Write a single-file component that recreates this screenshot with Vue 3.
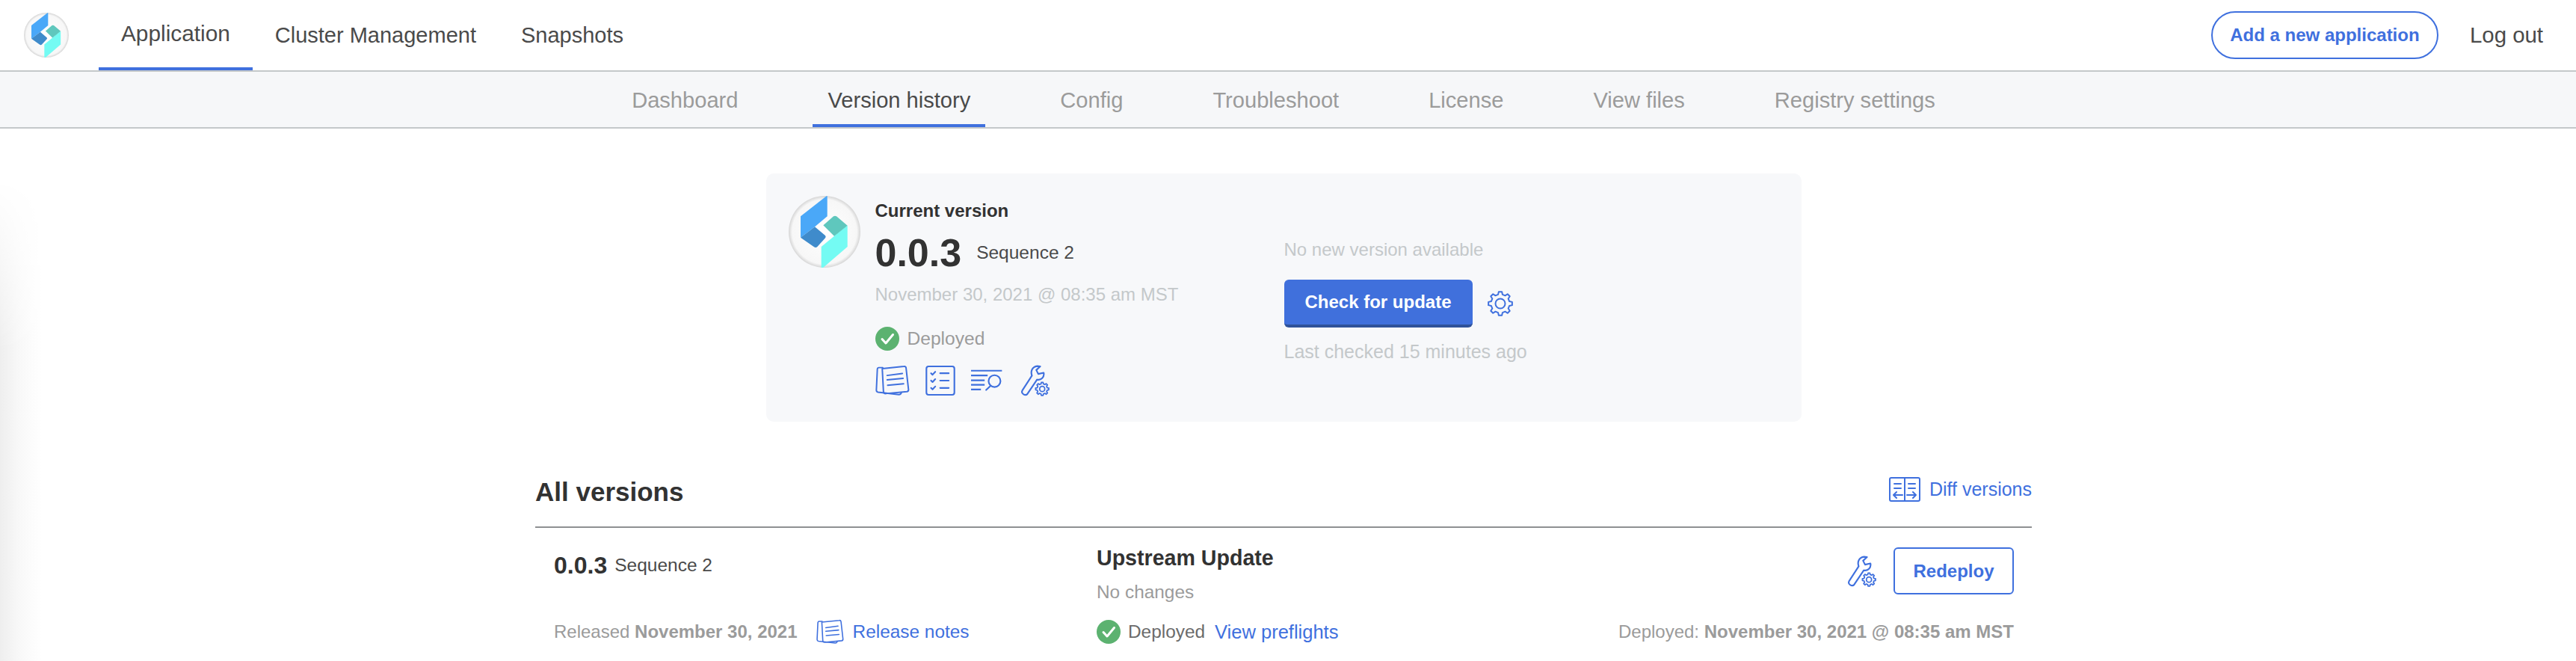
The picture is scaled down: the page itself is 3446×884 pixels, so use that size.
<script setup>
// gear outline with rounded lobes, used by the settings and wrench icons
function gearPath(cx, cy, ro, ri, n) {
  const step = (Math.PI * 2) / n
  const pt = (r, a) => (cx + r * Math.cos(a)).toFixed(2) + ' ' + (cy + r * Math.sin(a)).toFixed(2)
  let d = ''
  for (let i = 0; i < n; i++) {
    const a = i * step - Math.PI / 2
    d += (i === 0 ? 'M' : 'L') + pt(ri, a - step * 0.3)
    d += 'L' + pt(ro, a - step * 0.17) + 'L' + pt(ro, a + step * 0.17) + 'L' + pt(ri, a + step * 0.3)
  }
  return d + 'Z'
}

const bigGear = gearPath(17, 17, 16, 12.5, 8)
const smallGear = gearPath(698, 150, 27, 21, 8)

const navItems = [
  { label: 'Application', active: true },
  { label: 'Cluster Management' },
  { label: 'Snapshots' },
]
const subItems = [
  { label: 'Dashboard' },
  { label: 'Version history', active: true },
  { label: 'Config' },
  { label: 'Troubleshoot' },
  { label: 'License' },
  { label: 'View files' },
  { label: 'Registry settings' },
]
</script>

<template>
  <div class="page">
    <svg class="defs" width="0" height="0" aria-hidden="true">
      <defs>
        <radialGradient id="logoBg" cx="50%" cy="50%" r="50%">
          <stop offset="0%" stop-color="#ffffff" />
          <stop offset="90%" stop-color="#f7f7f7" />
          <stop offset="100%" stop-color="#d6d6d6" />
        </radialGradient>
        <clipPath id="logoClip"><circle cx="186" cy="180" r="144" /></clipPath>
        <symbol id="logo" viewBox="42 36 288 288">
          <circle cx="186" cy="180" r="144" fill="url(#logoBg)" />
          <g clip-path="url(#logoClip)">
            <path d="M197 34 L90 118 L90 203 L147 160 L197 118 Z" fill="#4aa8f8" />
            <path d="M90 203 L147 160 L189 195 Q193 200 189 205 L157 240 Q151 246 144 241 Z" fill="#3f8bcb" />
            <path d="M181 154 L222 118 Q228 114 234 118 L278 155 L225 197 Z" fill="#5fc7bd" />
            <path d="M225 197 L278 155 L240 196 L232 202 Z" fill="#52aea6" />
            <path d="M278 155 L278 240 L178 326 L173 326 L173 240 L225 197 Z" fill="#74fbf3" />
          </g>
        </symbol>
        <symbol id="notes" viewBox="32 55 140 128">
          <g fill="none" stroke="#3f70de" stroke-width="6" stroke-linecap="round" stroke-linejoin="round">
            <path d="M60 70 L148 61 Q156 60 157 67 L167 155 Q168 163 160 164 L74 172 Q66 172 65 165 Z" />
            <path d="M62 66 L46 66 Q41 66 40 72 L36 158 Q36 165 43 166 L128 176 Q135 176 138 168" />
            <path d="M80 98 L142 90 M80 116 L145 110 M82 138 L147 132" />
          </g>
        </symbol>
        <symbol id="checklist" viewBox="232 56 126 128">
          <g fill="none" stroke="#3f70de" stroke-width="6.5" stroke-linecap="round" stroke-linejoin="round">
            <rect x="238" y="62" width="114" height="116" rx="9" />
            <path d="M257 90 L263 96 L274 84 M257 120 L263 126 L274 114 M257 150 L263 156 L274 144" />
            <path d="M294 90 H329 M294 120 H329 M294 150 H329" />
          </g>
        </symbol>
        <symbol id="logs" viewBox="412 70 130 90">
          <g fill="none" stroke="#3f70de" stroke-width="6.5" stroke-linejoin="round">
            <path d="M415 75 H540 M415 94 H482 M415 114 H470 M415 132 H470 M415 151 H455" />
            <circle cx="510" cy="117" r="24" />
            <path d="M494 136 L476 153" stroke-linecap="round" />
          </g>
        </symbol>
        <symbol id="wrench" viewBox="610 52 120 128">
          <g fill="none" stroke="#3f70de" stroke-linecap="round" stroke-linejoin="round">
            <path stroke-width="6.5" d="M617 156 L656 96 C650 78 656 60 678 57 L690 58 L674 73 L682 89 L704 84 C708 102 693 116 677 112 L638 170 C630 180 610 170 617 156 Z" />
            <path stroke-width="5.5" :d="smallGear" />
            <circle stroke-width="5.5" cx="698" cy="150" r="10.5" />
          </g>
        </symbol>
        <symbol id="check" viewBox="0 0 32 32">
          <circle cx="16" cy="16" r="16" fill="#5cb270" />
          <path d="M9 16.5 L14 22 L23.5 10.5" fill="none" stroke="#ffffff" stroke-width="3" stroke-linecap="round" stroke-linejoin="round" />
        </symbol>
      </defs>
    </svg>

    <header class="topbar">
      <svg class="top-logo"><use href="#logo" /></svg>
      <nav class="top-nav">
        <a v-for="item in navItems" :key="item.label" class="top-link" :class="{ active: item.active }">{{ item.label }}</a>
      </nav>
      <div class="top-right">
        <button class="pill">Add a new application</button>
        <a class="logout">Log out</a>
      </div>
    </header>

    <nav class="subnav">
      <a v-for="item in subItems" :key="item.label" class="sub-link" :class="{ active: item.active }">{{ item.label }}</a>
    </nav>

    <main class="content">
      <section class="current-card">
        <svg class="card-logo"><use href="#logo" /></svg>
        <div class="current-left">
          <div class="current-label">Current version</div>
          <div class="current-version">
            <span class="version-big">0.0.3</span>
            <span class="sequence">Sequence 2</span>
          </div>
          <div class="current-date">November 30, 2021 @ 08:35 am MST</div>
          <div class="status-row">
            <svg class="check-icon"><use href="#check" /></svg>
            <span class="status-text">Deployed</span>
          </div>
          <div class="icon-row">
            <svg class="ic-notes"><use href="#notes" /></svg>
            <svg class="ic-check"><use href="#checklist" /></svg>
            <svg class="ic-logs"><use href="#logs" /></svg>
            <svg class="ic-wrench"><use href="#wrench" /></svg>
          </div>
        </div>
        <div class="current-right">
          <div class="muted-line">No new version available</div>
          <div class="update-row">
            <button class="primary-btn">Check for update</button>
            <svg class="gear-icon" viewBox="0 0 34 34">
              <g fill="none" stroke="#3f70de" stroke-width="2" stroke-linejoin="round">
                <path :d="bigGear" />
                <circle cx="17" cy="17" r="6.5" />
              </g>
            </svg>
          </div>
          <div class="muted-line last-checked">Last checked 15 minutes ago</div>
        </div>
      </section>

      <section class="versions">
        <div class="versions-head">
          <h2 class="versions-title">All versions</h2>
          <a class="diff-link">
            <svg class="diff-icon" viewBox="0 0 42 33">
              <g fill="none" stroke="#3f70de" stroke-width="2" stroke-linecap="round" stroke-linejoin="round">
                <rect x="1" y="1" width="40" height="31" rx="2" />
                <path d="M21 1 V32" />
                <path d="M7 9 H16 M7 15 H16 M26 9 H35 M26 15 H35" />
                <path d="M18 24 H6 M10 20 L6 24 L10 28 M24 24 H36 M32 20 L36 24 L32 28" />
              </g>
            </svg>
            Diff versions
          </a>
        </div>

        <div class="version-row">
          <div class="col col-left">
            <div class="row-version">
              <span class="version-num">0.0.3</span>
              <span class="sequence">Sequence 2</span>
            </div>
            <div class="row-foot">
              <span class="grey-text">Released <b>November 30, 2021</b></span>
              <a class="notes-link">
                <svg class="ic-notes-small"><use href="#notes" /></svg>
                Release notes
              </a>
            </div>
          </div>
          <div class="col col-mid">
            <div>
              <div class="row-title">Upstream Update</div>
              <div class="grey-text row-sub">No changes</div>
            </div>
            <div class="row-foot">
              <svg class="check-icon"><use href="#check" /></svg>
              <span class="row-status">Deployed</span>
              <a class="preflight-link">View preflights</a>
            </div>
          </div>
          <div class="col col-right">
            <div class="row-actions">
              <svg class="ic-wrench"><use href="#wrench" /></svg>
              <button class="outline-btn">Redeploy</button>
            </div>
            <div class="row-foot">
              <span class="grey-text">Deployed: <b>November 30, 2021 @ 08:35 am MST</b></span>
            </div>
          </div>
        </div>
      </section>
    </main>

    <div class="side-shadow"></div>
  </div>
</template>

<style>
html, body { margin: 0; background: #ffffff; }
</style>

<style scoped>
.page {
  position: relative; width: 3446px; height: 884px; overflow: hidden;
  background: #ffffff; color: #323232;
  font-family: "Liberation Sans", Arial, sans-serif;
}
.defs { position: absolute; }
a { display: inline-block; }
button { font-family: inherit; cursor: pointer; }

.topbar {
  display: flex; align-items: center; height: 94px; padding: 0 44px 0 32px;
  border-bottom: 2px solid #c4c8ca;
}
.top-logo { width: 60px; height: 60px; margin-right: 40px; }
.top-nav { display: flex; align-self: stretch; }
.top-link {
  display: flex; align-items: center; padding: 0 30px;
  font-size: 29px; color: #4a4a4a; box-sizing: border-box;
}
.top-link.active { border-bottom: 4px solid #3f70de; font-size: 29.8px; }
.top-right { display: flex; align-items: center; margin-left: auto; }
.pill {
  width: 304px; height: 64px; border: 2px solid #3f70de; border-radius: 32px;
  background: #ffffff; color: #3f70de; font-size: 24px; font-weight: 700; padding: 0;
}
.logout { margin-left: 42px; font-size: 29.4px; color: #4a4a4a; }

.subnav {
  display: flex; justify-content: center; gap: 80px; height: 74px;
  padding-right: 12px; background: #f6f7f9; border-bottom: 2px solid #c4c8ca;
}
.sub-link {
  display: flex; align-items: center; padding: 2px 20px 0; box-sizing: border-box;
  font-size: 29.1px; color: #9b9b9b;
}
.sub-link.active { color: #4a4a4a; border-bottom: 4px solid #3f70de; padding-top: 6px; }

.content { display: flex; flex-direction: column; align-items: center; padding: 60px 12px 0 0; }

.current-card {
  display: flex; width: 1385px; height: 332px; box-sizing: border-box;
  padding: 30px; background: #f7f8fa; border-radius: 10px;
}
.card-logo { flex: none; width: 96px; height: 96px; margin-right: 20px; }
.current-left { width: 547px; flex: none; padding-top: 6px; }
.current-label { font-size: 24px; font-weight: 700; line-height: 28px; color: #323232; }
.current-version { display: flex; align-items: center; margin-top: 16px; height: 52px; }
.version-big { font-size: 52px; font-weight: 700; color: #323232; margin-right: 20px; }
.sequence { font-size: 24.5px; color: #4a4a4a; }
.current-date { margin-top: 16px; font-size: 24px; line-height: 28px; color: #c4c8ca; }
.status-row { display: flex; align-items: center; margin-top: 29px; }
.check-icon { flex: none; width: 32px; height: 32px; }
.status-text { margin-left: 11px; font-size: 24.6px; color: #9b9b9b; }
.icon-row { display: flex; align-items: center; margin-top: 19px; }
.ic-notes { width: 46px; height: 42px; margin-right: 20px; }
.ic-check { width: 42px; height: 42px; margin-right: 19px; }
.ic-logs { width: 43px; height: 30px; margin-right: 24px; }
.ic-wrench { width: 40px; height: 42px; }

.current-right { display: flex; flex-direction: column; padding-top: 58px; }
.muted-line { font-size: 24px; line-height: 28px; color: #c4c8ca; }
.last-checked { font-size: 25px; }
.update-row { display: flex; align-items: center; margin: 26px 0 18px; }
.primary-btn {
  width: 252px; height: 64px; padding: 0; border: 0; border-bottom: 4px solid #2f5299; border-radius: 6px;
  background: #4070dc; color: #ffffff; font-size: 24px; font-weight: 700;
}
.gear-icon { width: 34px; height: 34px; margin-left: 20px; }

.versions { width: 2002px; margin-top: 54px; }
.versions-head {
  display: flex; justify-content: space-between; align-items: flex-start; height: 88px;
  padding-top: 20px; box-sizing: border-box; border-bottom: 2px solid #8e9092;
}
.versions-title { margin: 0; font-size: 35px; font-weight: 700; line-height: 40px; color: #323232; }
.diff-link { display: flex; align-items: center; gap: 12px; font-size: 25px; color: #3f70de; }
.diff-icon { width: 42px; height: 33px; }

.version-row { display: flex; height: 132px; padding: 24px 24px 0 25px; }
.col { display: flex; flex-direction: column; justify-content: space-between; }
.col-left { width: 726px; flex: none; }
.col-mid { flex: 1; }
.col-right { align-items: flex-end; }
.row-version { display: flex; align-items: center; height: 52px; }
.version-num { font-size: 32px; font-weight: 700; color: #323232; margin-right: 10px; }
.row-foot { display: flex; align-items: center; height: 34px; }
.grey-text { font-size: 24px; color: #9b9b9b; }
.grey-text b { font-weight: 700; }
.notes-link { display: flex; align-items: center; margin-left: 25px; font-size: 24.4px; color: #3f70de; }
.ic-notes-small { width: 37px; height: 34px; margin-right: 12px; }
.row-title { font-size: 28.6px; font-weight: 700; color: #323232; line-height: 32px; }
.row-sub { margin-top: 16px; font-size: 24.4px; line-height: 28px; }
.row-status { margin-left: 10px; font-size: 24.4px; color: #6b6b6b; }
.preflight-link { margin-left: 13px; font-size: 25.5px; color: #3f70de; }
.row-actions { display: flex; align-items: center; gap: 22px; margin-top: 2px; }
.outline-btn {
  width: 161px; height: 63px; padding: 0; background: #ffffff; border: 2px solid #3f70de; border-radius: 6px;
  color: #3f70de; font-size: 24px; font-weight: 700;
}

.side-shadow {
  position: absolute; left: 0; top: 240px; bottom: 0; width: 56px;
  background: linear-gradient(to right, #eeeeee, #f8f8f8 45%, #ffffff);
  -webkit-mask-image: linear-gradient(to bottom, transparent, #000 230px);
  mask-image: linear-gradient(to bottom, transparent, #000 230px);
}
</style>
